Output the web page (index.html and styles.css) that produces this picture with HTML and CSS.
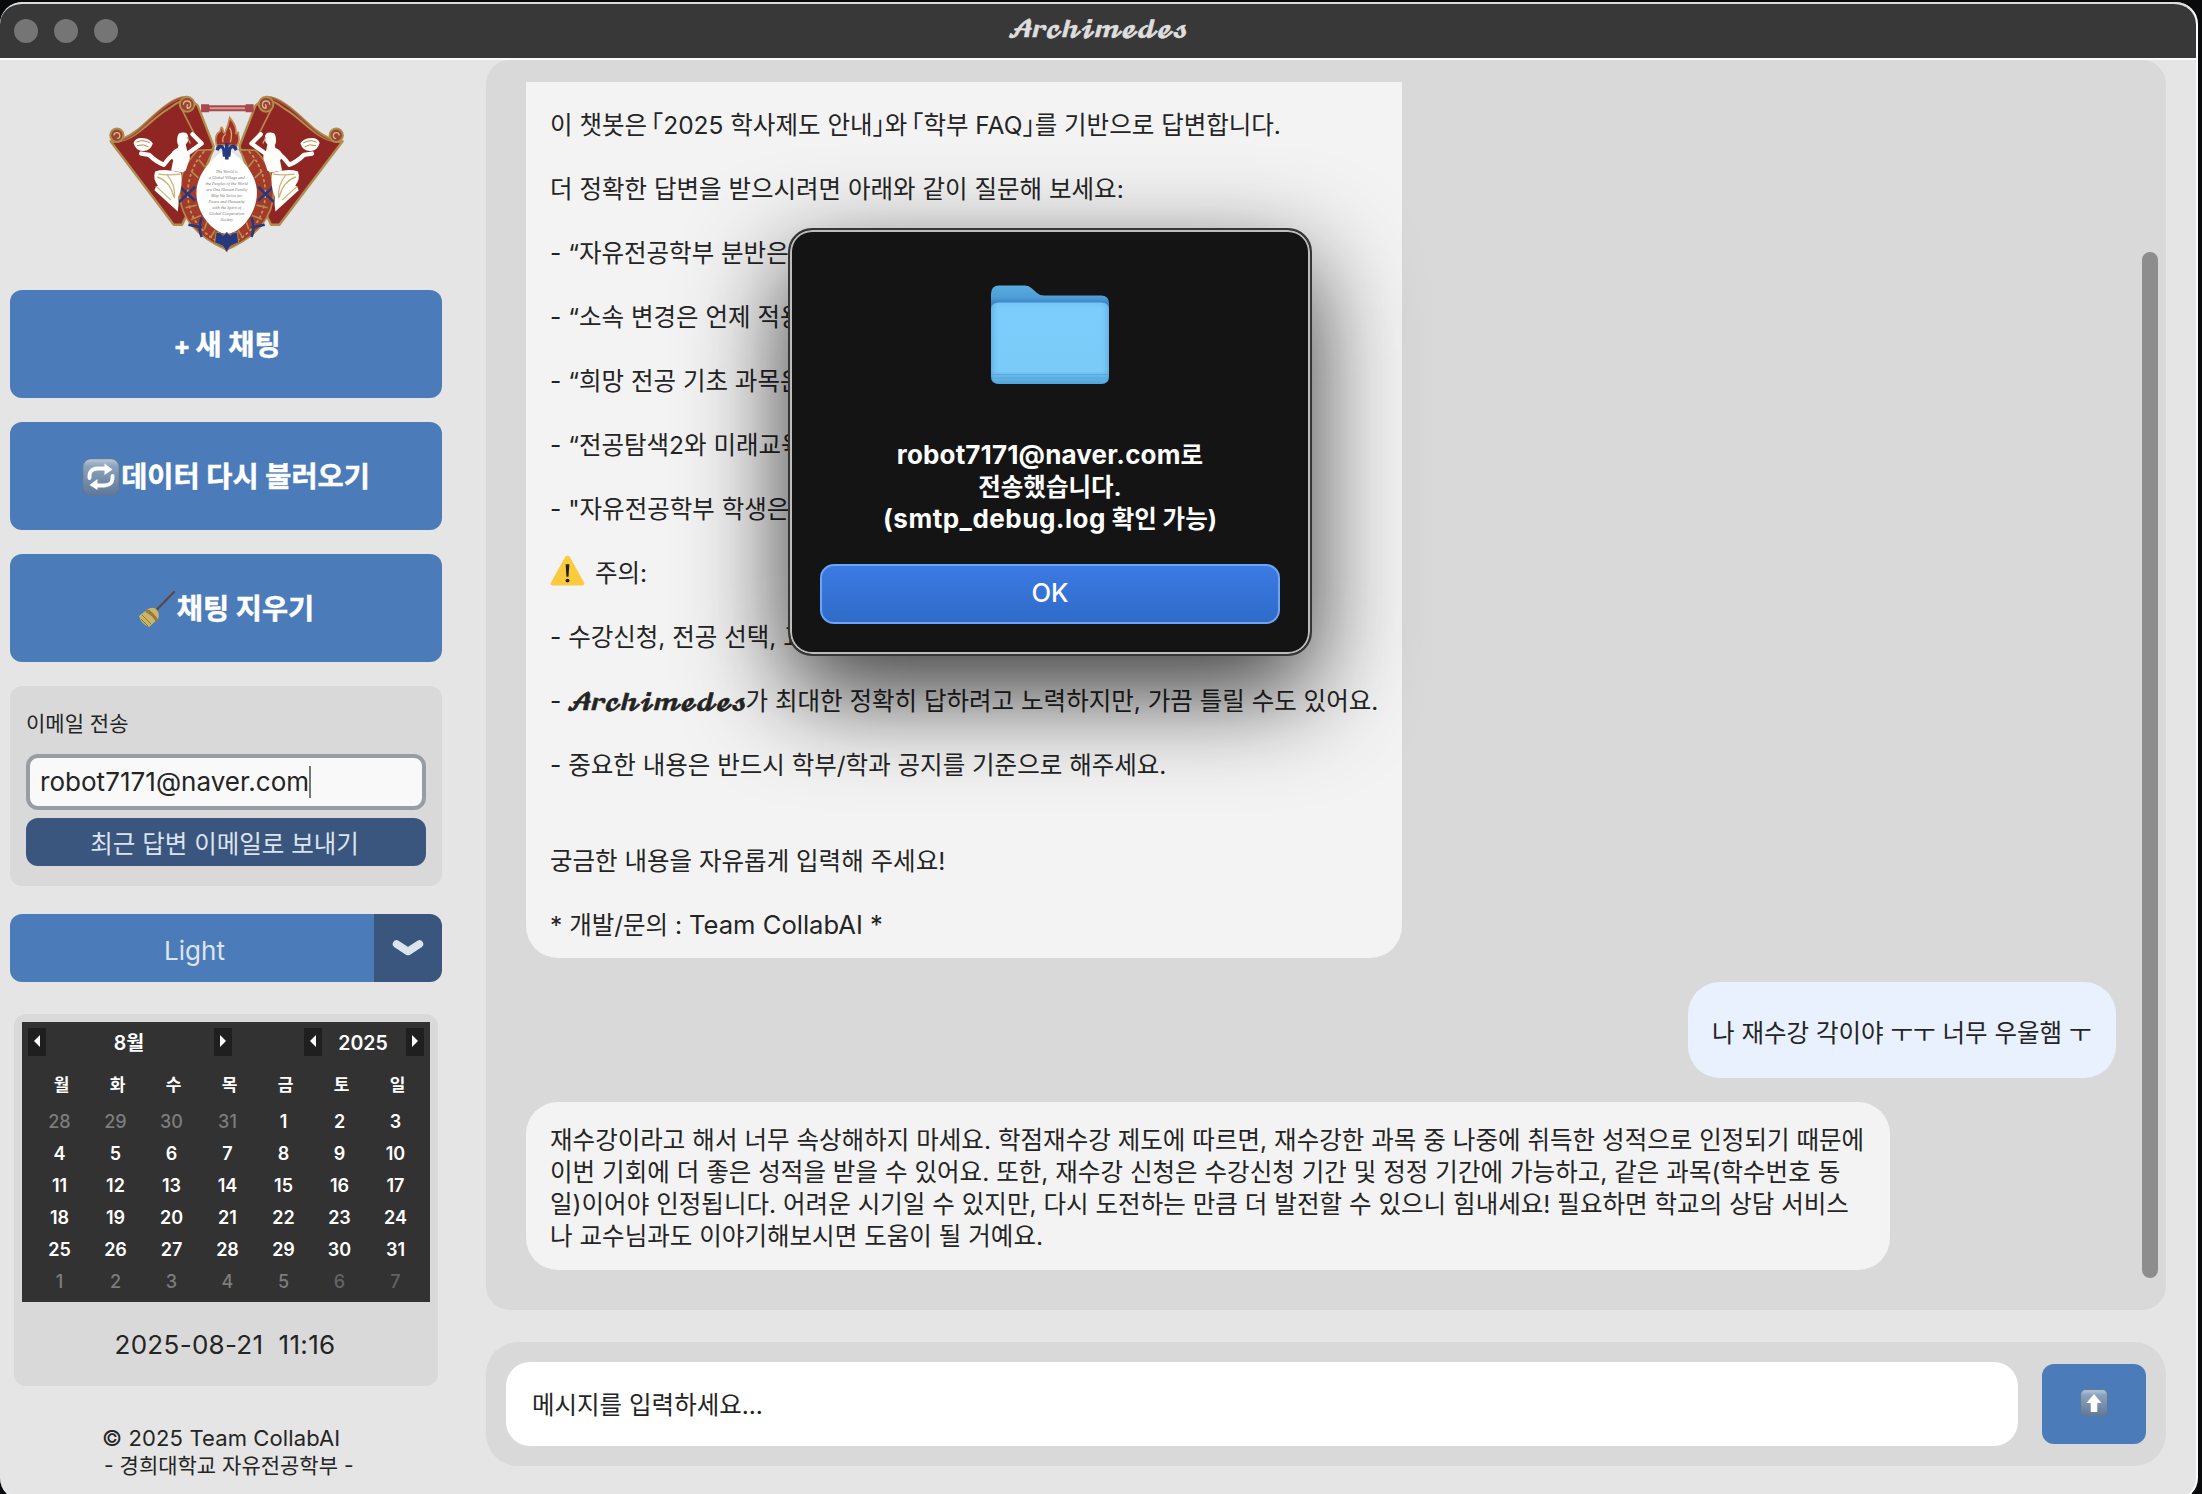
FILE: index.html
```html
<!DOCTYPE html>
<html lang="ko">
<head>
<meta charset="utf-8">
<title>Archimedes</title>
<link rel="stylesheet" href="styles.css">
</head>
<body>
<div class="window">
  <header class="titlebar">
    <div class="lights"><i></i><i></i><i></i></div>
    <h1 class="title">𝓐𝓻𝓬𝓱𝓲𝓶𝓮𝓭𝓮𝓼</h1>
  </header>
  <div class="content">
    <aside class="sidebar">
      <svg class="logo" viewBox="320 280 720 490">
        <defs>
          <g id="wing">
            <path d="M330 425 L520 676 L545 676 L600 560 L640 440 L592 318 L560 292 C510 290 450 360 410 392 C390 408 345 432 330 425Z" fill="#902624" stroke="#b08d4c" stroke-width="7" stroke-linejoin="round"/>
            <path d="M540 320 L600 440" stroke="#b08d4c" stroke-width="5" fill="none"/>
            <path d="M345 424 C400 428 450 360 500 330 C520 318 532 305 545 305" stroke="#b08d4c" stroke-width="6" fill="none"/>
            <path d="M352 424 C405 420 450 350 500 318 C520 304 535 296 552 294" stroke="#a3553a" stroke-width="5" fill="none"/>
            <circle cx="560" cy="314" r="22" fill="#9c4332" stroke="#b08d4c" stroke-width="6"/>
            <path d="M549 315a11 11 0 1 1 12 11q-3-8 2-12" fill="none" stroke="#d2bb8a" stroke-width="4"/>
            <circle cx="349" cy="407" r="20" fill="#9c4332" stroke="#b08d4c" stroke-width="6"/>
            <path d="M340 408a9 9 0 1 1 10 9" fill="none" stroke="#d2bb8a" stroke-width="4"/>
            <path d="M592 452 C525 520 520 610 575 680 C605 715 640 735 679 752 L679 700 C600 660 570 580 640 450Z" fill="#a33a2a" stroke="#b08d4c" stroke-width="5"/>
            <path d="M612 455 C560 510 545 600 585 665 Q620 715 670 735" fill="none" stroke="#c39a5c" stroke-width="5" stroke-dasharray="9 7"/>
            <path d="M595 480l18 22M572 515l22 20M555 625l34-8M572 660l30-12M612 690l8-24M632 712l12-20" stroke="#b08d4c" stroke-width="5"/>
            <path d="M536 560l48 44M584 562l-48 46M604 655q-12 30 0 58M564 676l40 8" stroke="#26397c" stroke-width="8" fill="none"/>
            <path d="M531 412q2-14 18-13 14 0 15 16 0 12-8 20l4 18q10 8 8 24l-12 36-10 6-34-6 6-30-8-14q4-18 22-24l2-8q-6-8-3-25z" fill="#fffefa"/>
            <path d="M562 462l42-30-28-28" fill="none" stroke="#fffefa" stroke-width="13" stroke-linecap="round" stroke-linejoin="round"/>
            <path d="M522 462q-18 14-32 34-24-10-44-30l-24-4" fill="none" stroke="#fffefa" stroke-width="13" stroke-linecap="round" stroke-linejoin="round"/>
            <path d="M464 516q30-10 78 4 6 40-8 72 2 24-2 44l-70-64q2-10 10-14-16-20-8-42z" fill="#fffefa"/>
            <path d="M474 524q30 4 66 0M470 532q40 14 50 60M500 526q26 30 22 70M466 560l46 42M560 412l10 20" fill="none" stroke="#c9b27c" stroke-width="3.500"/>
            <path d="M399 430q6-18 32-14 18 2 26 16-8 24-32 22-20-2-26-24z" fill="#fffefa"/>
            <path d="M408 428q18-10 40 2M410 438q20-6 34 4" fill="none" stroke="#b5894c" stroke-width="3"/>
          </g>
        </defs>
        <use href="#wing"/>
        <use href="#wing" transform="translate(1357.5 0) scale(-1 1)"/>
        <path d="M602 326h158" stroke="#a9484b" stroke-width="24" stroke-dasharray="24 110"/>
        <path d="M620 326h122" stroke="#a9484b" stroke-width="18"/>
        <path d="M628 326h106" stroke="#d89896" stroke-width="6"/>
        <path d="M648 436q-8-30 12-42 2-20 8-4 0 12 6 10 10-22 14-46 24 28 18 50 10-14 8 2 6 16-4 32z" fill="#9f3026" stroke="#c28a55" stroke-width="5"/>
        <path d="M668 428q-4-16 8-24M690 428q8-26-2-44" fill="none" stroke="#d8a96b" stroke-width="4"/>
        <path d="M679 448 C640 470 588 520 588 580 C588 640 635 700 679 704 C723 700 770 640 770 580 C770 520 718 470 679 448Z" fill="#fff"/>
        <path d="M646 450q4-22 22-12 8 6 11 34 3-28 11-34 18-10 22 12l-8 4q-8-14-12-2 0 14-2 20h-22q-2-6-2-20-4-12-12 2zM674 430h11v50h-11z" fill="#26397c"/>
        <path d="M679 758l-12-18-24-10 4-32q16 0 22 10l10-10 10 10q6-10 22-10l4 32-24 10z" fill="#26397c" stroke="#a98a4f" stroke-width="3"/>
        <g class="motto">
          <text x="679" y="521">The World is</text><text x="679" y="539">a Global Village and</text><text x="679" y="557">the Peoples of the World</text>
          <text x="679" y="575">are One Human Family</text><text x="679" y="593">May We Strive for</text><text x="679" y="611">Peace and Humanity</text>
          <text x="679" y="629">with the Spirit of</text><text x="679" y="647">Global Cooperation</text><text x="679" y="665">Society</text>
        </g>
      </svg>
      <button class="action"><span class="l-new"><span class="plus">+</span>새 채팅</span></button>
      <button class="action">
        <svg class="emoji" viewBox="0 0 38 38">
          <defs><linearGradient id="key" x2="0" y2="1"><stop offset="0" stop-color="#bccbdc"/><stop offset=".2" stop-color="#8ba3bd"/><stop offset="1" stop-color="#60779a"/></linearGradient></defs>
          <rect x=".7" y=".7" width="36.6" height="36.6" rx="8" fill="url(#key)" stroke="#5f7896" stroke-width="1.2"/>
          <path d="M7.500 20q-1-9 8-9.500h8M30.500 18q1 9-8 9.500h-8" fill="none" stroke="#fff" stroke-width="3.800" stroke-linecap="round"/>
          <path d="M22.500 5.500l8 6-8 5.500zM15.500 21l-8 6 8 5z" fill="#fff"/>
        </svg><span>데이터 다시 불러오기</span></button>
      <button class="action">
        <svg class="emoji" viewBox="0 0 38 38">
          <path d="M18.500 20L36 2" stroke="#5e4643" stroke-width="2.200" stroke-linecap="round"/>
          <path d="M10 19q6-3 9 1t1 9L11 37Q3 34 1 26z" fill="#c9b565"/>
          <path d="M8 20.500q7 3 11 10.500" fill="none" stroke="#9c7648" stroke-width="3"/>
          <path d="M4 25l9 9M3 29l7 7M11 20l8 9" stroke="#8c7a3c" stroke-width="1"/>
        </svg><span>채팅 지우기</span></button>
      <section class="mail">
        <label>이메일 전송</label>
        <div class="mail-input"><span>robot7171@naver.com</span><i class="caret"></i></div>
        <button class="mail-send"><span>최근 답변 이메일로 보내기</span></button>
      </section>
      <div class="theme">
        <span class="theme-name">Light</span>
        <span class="theme-arrow"><svg viewBox="0 0 32 18"><path d="M4.500 5L16 12.500 27.500 5" fill="none" stroke="#dce4ee" stroke-width="7.500" stroke-linecap="round" stroke-linejoin="round"/></svg></span>
      </div>
      <section class="date-card">
        <div class="calendar">
          <div class="cal-head">
            <span class="nav prev"></span><b class="month">8월</b><span class="nav next"></span>
            <span class="nav prev year-prev"></span><b class="year">2025</b><span class="nav next"></span>
          </div>
          <div class="week names"><span>월</span><span>화</span><span>수</span><span>목</span><span>금</span><span>토</span><span>일</span></div>
          <div class="week"><em>28</em><em>29</em><em>30</em><em>31</em><span>1</span><span>2</span><span>3</span></div>
          <div class="week"><span>4</span><span>5</span><span>6</span><span>7</span><span>8</span><span>9</span><span>10</span></div>
          <div class="week"><span>11</span><span>12</span><span>13</span><span>14</span><span>15</span><span>16</span><span>17</span></div>
          <div class="week"><span>18</span><span>19</span><span>20</span><span>21</span><span>22</span><span>23</span><span>24</span></div>
          <div class="week"><span>25</span><span>26</span><span>27</span><span>28</span><span>29</span><span>30</span><span>31</span></div>
          <div class="week"><em>1</em><em>2</em><em>3</em><em>4</em><em>5</em><em class="dim">6</em><em class="dim">7</em></div>
        </div>
        <div class="clock">2025-08-21&nbsp; 11:16</div>
      </section>
      <footer class="credit"><span class="c1">© 2025 Team CollabAI</span><span class="c2">- 경희대학교 자유전공학부 -</span></footer>
    </aside>
    <main class="main">
      <section class="chat">
        <div class="messages">
          <article class="bubble bot intro">
            <p>이 챗봇은 <span class="open">｢</span>2025 학사제도 안내｣와 <span class="open">｢</span>학부 FAQ｣를 기반으로 답변합니다.</p>
            <p>더 정확한 답변을 받으시려면 아래와 같이 질문해 보세요:</p>
            <p>- “자유전공학부 분반은</p>
            <p>- “소속 변경은 언제 적용</p>
            <p>- “희망 전공 기초 과목은</p>
            <p>- “전공탐색2와 미래교육</p>
            <p>- "자유전공학부 학생은</p>
            <p class="warn"><svg viewBox="0 0 34 30"><path d="M17 .5q1.500 0 2.300 1.500L33.200 27q.8 2.300-1.500 2.500H2.300Q0 29.300.8 27L14.700 2Q15.500.5 17 .5z" fill="#fcca3f"/><path d="M15.200 9h3.600l-.8 12h-2z" fill="#222"/><circle cx="17" cy="24.800" r="1.900" fill="#222"/></svg>주의:</p>
            <p>- 수강신청, 전공 선택, 교</p>
            <p>- <span class="script">𝓐𝓻𝓬𝓱𝓲𝓶𝓮𝓭𝓮𝓼</span>가 최대한 정확히 답하려고 노력하지만, 가끔 틀릴 수도 있어요.</p>
            <p>- 중요한 내용은 반드시 학부/학과 공지를 기준으로 해주세요.</p>
            <p>궁금한 내용을 자유롭게 입력해 주세요!</p>
            <p>* 개발/문의 : <span class="team">Team CollabAI *</span></p>
          </article>
          <article class="bubble user"><p>나 재수강 각이야 ㅜㅜ 너무 우울햄 ㅜ</p></article>
          <article class="bubble bot reply">
            <p>재수강이라고 해서 너무 속상해하지 마세요. 학점재수강 제도에 따르면, 재수강한 과목 중 나중에 취득한 성적으로 인정되기 때문에</p>
            <p>이번 기회에 더 좋은 성적을 받을 수 있어요. 또한, 재수강 신청은 수강신청 기간 및 정정 기간에 가능하고, 같은 과목(학수번호 동</p>
            <p>일)이어야 인정됩니다. 어려운 시기일 수 있지만, 다시 도전하는 만큼 더 발전할 수 있으니 힘내세요! 필요하면 학교의 상담 서비스</p>
            <p>나 교수님과도 이야기해보시면 도움이 될 거예요.</p>
          </article>
        </div>
        <div class="scroll"><div class="thumb"></div></div>
      </section>
      <section class="composer">
        <div class="entry">메시지를 입력하세요...</div>
        <button class="send"><svg viewBox="0 0 28 28"><rect x=".6" y=".6" width="26.800" height="26.800" rx="5" fill="url(#key)" stroke="#5f7896"/><path d="M14 5l7.500 9h-4.200v9h-6.600v-9H6.500z" fill="#fff"/></svg></button>
      </section>
    </main>
  </div>
</div>
<div class="dialog">
  <svg class="folder" viewBox="0 0 118 100">
    <defs>
      <linearGradient id="fb" x2="0" y2="1"><stop offset="0" stop-color="#5aabe0"/><stop offset=".3" stop-color="#4f9fd8"/><stop offset=".48" stop-color="#3a82c6"/></linearGradient>
      <linearGradient id="ff" x2="0" y2="1"><stop offset="0" stop-color="#74c4f5"/><stop offset=".08" stop-color="#7ccdfb"/><stop offset=".84" stop-color="#7bcbf9"/><stop offset=".9" stop-color="#66b8ea"/><stop offset="1" stop-color="#4fa3da"/></linearGradient>
      <linearGradient id="fs"><stop offset="0" stop-color="#4c9fd8" stop-opacity=".55"/><stop offset=".08" stop-color="#7ccdfb" stop-opacity="0"/><stop offset=".92" stop-color="#7ccdfb" stop-opacity="0"/><stop offset="1" stop-color="#4c9fd8" stop-opacity=".55"/></linearGradient>
    </defs>
    <path d="M0 9q0-8.500 8-8.500h26q4 0 7 3l5 4.500q3 2.500 7 2.500h57q8 0 8 8v20H0z" fill="url(#fb)"/>
    <path d="M0 25q0-7.500 8-7.500h102q8 0 8 7.500v66q0 8-8 8H8q-8 0-8-8z" fill="url(#ff)"/>
    <path d="M0 25q0-7.500 8-7.500h102q8 0 8 7.500v66q0 8-8 8H8q-8 0-8-8z" fill="url(#fs)"/>
    <path d="M1 89.500h116M1 93h116" stroke="#57a9dd" stroke-width="1"/>
  </svg>
  <p class="dialog-text"><span><span class="en">robot7171@naver.com</span>로</span><span>전송했습니다.</span><span><span class="en file">(smtp_debug.log</span> 확인 가능)</span></p>
  <button class="ok">OK</button>
</div>
</body>
</html>
```
FILE: styles.css
```css
* { box-sizing: border-box; margin: 0; padding: 0; }
body {
  width: 2202px; height: 1494px; overflow: hidden; position: relative;
  background: #080a0b; color: #242424;
  font: 24.5px/32px Inter, "Noto Sans CJK KR", sans-serif;
}
button { border: 0; font: inherit; display: flex; align-items: center; justify-content: center; }
p, span, label { white-space: pre; }
.en { font-size: 26px; letter-spacing: .15px; }
.en.file { letter-spacing: .5px; }
.team { font-size: 25.6px; }

.window {
  width: 2198px; height: 1498px; margin-top: 2px; overflow: hidden;
  border-radius: 22px; background: #e5e5e5;
  border: solid #fcfcfc; border-width: 0 2px 2px 0;
}
.titlebar {
  height: 58px; display: grid; grid-template-columns: 1fr auto 1fr; align-items: center;
  background: #383838; border-top: 2px solid #dcdcdc; border-bottom: 2px solid #fafafa;
  border-radius: 22px 22px 0 0;
}
.lights { display: flex; gap: 16px; padding-left: 14px; }
.lights i { width: 24px; height: 24px; border-radius: 50%; background: #757575; }
.title, .script {
  font-family: "DejaVu Math TeX Gyre", "DejaVu Serif", serif; font-weight: 400; font-size: 22.5px;
  -webkit-text-stroke: .6px currentColor; letter-spacing: -2.9px;
}
.title { line-height: 30px; color: #dedede; padding-right: 4px; }
.script { margin-left: -2px; margin-right: 2px; line-height: 20px; }

.content { display: flex; gap: 44px; height: 1436px; }
.sidebar { width: 442px; padding-left: 10px; display: flex; flex-direction: column; }
.logo { width: 240px; height: 163px; margin: 33px 0 34px 97px; display: block; flex: none; }
.motto { font: italic 13px "Liberation Serif", serif; text-anchor: middle; fill: #777; }
.action {
  height: 108px; margin-bottom: 24px; border-radius: 12px; background: #4b7bb9; color: #fff;
  font-weight: 700; font-size: 28.4px; -webkit-text-stroke: .5px #fff; padding-top: 2px; flex: none;
}
.emoji { width: 38px; height: 38px; margin-right: 1px; }
.l-new { padding-left: 2px; }
.plus { font-size: 25px; margin-right: 5px; }
.mail { height: 200px; padding: 20px 16px; border-radius: 12px; background: #d9d9d9; flex: none; }
.mail label { display: block; height: 48px; line-height: 36px; font-size: 21px; }
.mail-input {
  height: 56px; border: 4px solid #979da2; border-radius: 12px; background: #f9f9fa;
  padding-left: 10px; display: flex; align-items: center; font-size: 26px; letter-spacing: .04px;
}
.mail-input span { line-height: 30px; margin-top: -1px; }
.caret { width: 2px; height: 32px; background: #777; }
.mail-send { width: 400px; height: 48px; margin-top: 8px; padding-top: 4px; padding-right: 3px; border-radius: 12px; background: #3a567e; color: #dce4ee; }
.theme { height: 68px; margin: 28px 0 32px; display: flex; border-radius: 12px; overflow: hidden; color: #dce4ee; flex: none; }
.theme-name { flex: 1; background: #4b7bb9; text-align: center; line-height: 73px; font-size: 26px; padding-left: 5px; }
.theme-arrow { width: 68px; background: #3a567e; display: flex; align-items: center; justify-content: center; }
.theme-arrow svg { width: 32px; height: 18px; }
.date-card { height: 372px; margin: 0 4px; padding: 8px; border-radius: 12px; background: #d9d9d9; flex: none; }
.calendar { height: 280px; background: #323232; color: #fff; padding: 6px; font-weight: 600; font-size: 18px; }
.cal-head { height: 28px; display: flex; margin-bottom: 14px; font-size: 19.5px; line-height: 30px; text-align: center; }
.nav { width: 18px; background: #1f1f1f; display: flex; align-items: center; justify-content: center; }
.nav::before { content: ""; width: 6px; height: 12px; background: #fff; margin-top: -2px; }
.prev::before { clip-path: polygon(100% 0, 0 50%, 100% 100%); }
.next::before { clip-path: polygon(0 0, 100% 50%, 0 100%); }
.month { width: 168px; font-weight: 600; padding-right: 2px; }
.year { width: 84px; font-weight: 600; padding-right: 2px; }
.year-prev { margin-left: 72px; }
.week { height: 32px; display: grid; grid-template-columns: repeat(7, 56px); margin-left: 3.5px; text-align: center; line-height: 32px; }
.names { height: 36px; line-height: 31px; padding-left: 2px; font-size: 17px; }
.week em { font-style: normal; font-weight: 500; color: #7d7d7d; }
.week em.dim { color: #646464; }
.clock { height: 84px; line-height: 86px; text-align: center; font-size: 26px; letter-spacing: .3px; padding-right: 2px; white-space: pre; }
.credit { margin-top: 38px; display: flex; flex-direction: column; font-size: 21px; line-height: 28px; }
.c1 { margin-left: 92px; font-size: 22px; letter-spacing: .12px; }
.c2 { margin-left: 94px; }

.main { width: 1680px; }
.chat { height: 1250px; border-radius: 24px; background: #d9d9d9; display: flex; padding: 22px 8px 0 40px; }
.messages { flex: 1; padding-right: 26px; display: flex; flex-direction: column; gap: 24px; align-items: flex-start; }
.bubble { border-radius: 32px; padding: 22px 24px 0; background: #f3f3f3; }
.intro { width: 876px; height: 876px; border-radius: 0 0 32px 32px; padding-top: 27px; }
.intro p { height: 64px; }
.intro p:nth-child(11) { height: 96px; }
.open { margin-left: -3px; }
.intro .warn { margin-top: -2px; height: 66px; }
.warn svg { width: 35px; height: 31px; margin-right: 10px; vertical-align: -4px; }
.user { align-self: flex-end; width: 428px; height: 96px; padding-top: 35px; background: #e9f1ff; }
.reply { width: 1364px; height: 168px; letter-spacing: .03px; }
.scroll { width: 16px; padding-top: 170px; }
.thumb { height: 1026px; border-radius: 8px; background: #8d8d8d; }
.composer {
  height: 124px; margin-top: 32px; border-radius: 32px; background: #d9d9d9; padding: 0 20px;
  display: flex; align-items: center; gap: 24px;
}
.entry { flex: 1; height: 84px; border-radius: 24px; background: #fff; line-height: 86px; padding-left: 26px; }
.send { width: 104px; height: 80px; border-radius: 12px; background: #4b7bb9; }
.send svg { width: 28px; height: 28px; margin-top: -3px; }

.dialog {
  position: absolute; left: 788px; top: 228px; width: 524px; height: 428px;
  border: 2px solid #363636; border-radius: 24px; background: #141414; padding: 55px 30px 30px;
  box-shadow: inset 0 0 0 2px #bdbdbd, 0 36px 100px rgba(0,0,0,.76);
  display: flex; flex-direction: column; align-items: center; color: #fff;
}
.folder { width: 118px; height: 100px; flex: none; }
.dialog-text { margin-top: 54px; display: flex; flex-direction: column; align-items: center; font-weight: 700; height: 96px; }
.dialog-text > span { height: 32px; }
.ok {
  width: 460px; height: 60px; margin-top: 29px; padding-bottom: 2px; border: 2px solid #6ba4f8; border-radius: 14px;
  background: linear-gradient(#3b7ae3, #306bc8); color: #fff; font-size: 25.5px; font-weight: 500; flex: none;
}
```
